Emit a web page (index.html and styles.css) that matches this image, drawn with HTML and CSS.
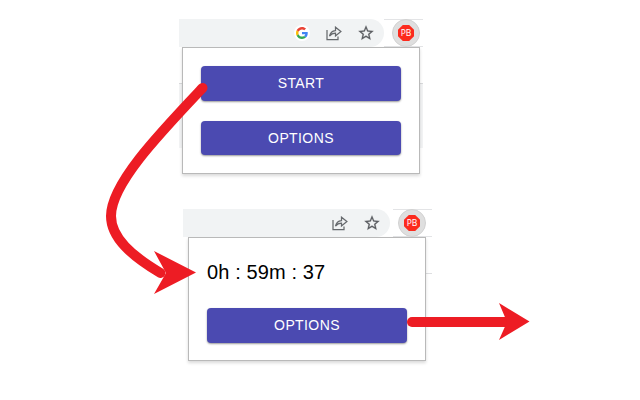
FILE: index.html
```
<!DOCTYPE html>
<html lang="en">
<head>
<meta charset="utf-8">
<title>Timer popup</title>
<link rel="stylesheet" href="styles.css">
</head>
<body>
<svg class="defs" width="0" height="0">
  <symbol id="share" viewBox="0 0 16 15"><path d="M1 4V13.500H12V10.500M3.500 10.200C4.200 6.500 6.300 4.900 9.500 4.600V1.200L14.900 5.600L9.500 10V7.200C7 7.200 5 8.200 3.500 10.200Z" fill="none" stroke="#66696d" stroke-width="1.250"/></symbol>
  <symbol id="star" viewBox="0 0 24 24"><path d="M22 9.24l-7.19-.62L12 2 9.19 8.63 2 9.24l5.46 4.73L5.82 21 12 17.27 18.18 21l-1.63-7.03L22 9.24zM12 15.4l-3.76 2.27 1-4.28-3.32-2.88 4.38-.38L12 6.1l1.71 4.04 4.38.38-3.32 2.88 1 4.28L12 15.4z" fill="#5a5d61" stroke="#5a5d61" stroke-width=".3"/></symbol>
</svg>
<main>
  <section class="shot first">
    <header class="toolbar">
      <div class="address">
        <span class="google"><svg width="12" height="12" viewBox="0 0 48 48"><path fill="#ea4335" d="M24 9.5c3.54 0 6.71 1.22 9.21 3.6l6.85-6.85C35.9 2.38 30.47 0 24 0 14.62 0 6.51 5.38 2.56 13.22l7.98 6.19C12.43 13.72 17.74 9.5 24 9.5z"/><path fill="#4285f4" d="M46.98 24.55c0-1.57-.15-3.09-.38-4.55H24v9.02h12.94c-.58 2.96-2.26 5.48-4.78 7.18l7.73 6c4.51-4.18 7.09-10.36 7.09-17.65z"/><path fill="#fbbc05" d="M10.53 28.59c-.48-1.45-.76-2.99-.76-4.59s.27-3.14.76-4.59l-7.98-6.19C.92 16.46 0 20.12 0 24c0 3.88.92 7.54 2.56 10.78l7.97-6.19z"/><path fill="#34a853" d="M24 48c6.48 0 11.93-2.13 15.89-5.81l-7.73-6c-2.15 1.45-4.92 2.3-8.16 2.3-6.26 0-11.57-4.22-13.47-9.91l-7.98 6.19C6.51 42.62 14.62 48 24 48z"/></svg></span>
        <svg class="share"><use href="#share"/></svg>
        <svg class="star"><use href="#star"/></svg>
      </div>
      <span class="ext"><span class="octagon">PB</span></span>
    </header>
    <div class="page">
      <div class="popup">
        <button>START</button>
        <button class="short">OPTIONS</button>
      </div>
    </div>
  </section>
  <section class="shot second">
    <header class="toolbar">
      <div class="address">
        <svg class="share"><use href="#share"/></svg>
        <svg class="star"><use href="#star"/></svg>
      </div>
      <span class="ext"><span class="octagon">PB</span></span>
    </header>
    <div class="page">
      <div class="popup">
        <p class="time">0h : 59m : 37</p>
        <button>OPTIONS</button>
      </div>
    </div>
  </section>
</main>
<svg class="arrows" width="640" height="400" viewBox="0 0 640 400">
  <g fill="none" stroke="#ed1c24" stroke-width="10" stroke-linecap="round">
    <path d="M202.500 88C159 134 111 184 111 216C111 238 132 256 160.500 273"/>
    <path d="M412 322H506"/>
  </g>
  <g fill="#ed1c24">
    <path d="M154 251L196 272.500L154 294L166 273Z"/>
    <path d="M499 303L529.500 321.500L499 340L507 322Z"/>
  </g>
</svg>
</body>
</html>
```
FILE: styles.css
```
* {
  box-sizing: border-box;
}

body {
  margin: 0;
  width: 640px;
  height: 400px;
  overflow: hidden;
  background: #fff;
  font-family: "Liberation Sans", Arial, sans-serif;
}

.defs {
  display: block;
}

main {
  display: flex;
  flex-direction: column;
  gap: 35px;
  padding-top: 19px;
}

.first {
  width: 244px;
  margin-left: 179px;
}

.second {
  width: 249px;
  margin-left: 183px;
}

.toolbar {
  display: flex;
  height: 28px;
  background: linear-gradient(#e3e4e6 1px, #fff 1px, #fff 27px, #e3e4e6 27px) right / 39px 100% no-repeat;
}

.address {
  display: flex;
  align-items: center;
  justify-content: flex-end;
  width: 205px;
  padding-right: 9px;
  border-radius: 0 14px 14px 0;
  background: #f1f3f4;
}

.second .address {
  width: 207px;
}

.google {
  display: flex;
  align-items: center;
  justify-content: center;
  width: 16px;
  height: 16px;
  margin-right: 16px;
  border-radius: 50%;
  background: #fff;
}

.share {
  width: 16px;
  height: 15px;
  margin-right: 15px;
}

.star {
  width: 18px;
  height: 18px;
}

.ext {
  display: flex;
  align-items: center;
  justify-content: center;
  width: 28px;
  height: 28px;
  margin-left: 8px;
  border: 1px solid #d2d2d2;
  border-radius: 50%;
  background: #dfdfdf;
}

.octagon {
  width: 16px;
  height: 16px;
  background: #fc2a1d;
  clip-path: polygon(30% 0, 70% 0, 100% 30%, 100% 70%, 70% 100%, 30% 100%, 0 70%, 0 30%);
  color: #fff;
  font: 8.5px/16px "Noto Sans", sans-serif;
  text-align: center;
}

.page {
  height: 127px;
  padding-left: 3px;
  background: linear-gradient(#fff 36px, #d9dadc 36px, #d9dadc 37px, #f3f4f5 37px, #f3f4f5 101px, #fff 101px);
}

.second .page {
  height: 124px;
  padding-left: 5px;
  background: linear-gradient(90deg, #fff 8px, transparent 8px), linear-gradient(#fff 36px, #dedfe1 36px, #dedfe1 37px, #fff 37px);
}

.popup {
  display: flex;
  flex-direction: column;
  gap: 20px;
  width: 238px;
  height: 100%;
  padding: 18px;
  border: 1px solid #b9b9b9;
  background: #fff;
  box-shadow: 0 2px 3px rgba(0, 0, 0, .15);
}

button {
  flex: none;
  width: 200px;
  height: 35px;
  padding: 0;
  border: 0;
  border-radius: 4px;
  background: #4b4ab1;
  color: #fff;
  font: 14px/35px "Liberation Sans", Arial, sans-serif;
  letter-spacing: .4px;
  box-shadow: 0 1px 2px rgba(0, 0, 0, .4);
}

.short {
  height: 34px;
  line-height: 34px;
}

.time {
  height: 32px;
  margin: 0;
  color: #000;
  font-size: 20px;
  line-height: 32px;
  letter-spacing: .12px;
}

.arrows {
  position: absolute;
  top: 0;
  left: 0;
}
```
